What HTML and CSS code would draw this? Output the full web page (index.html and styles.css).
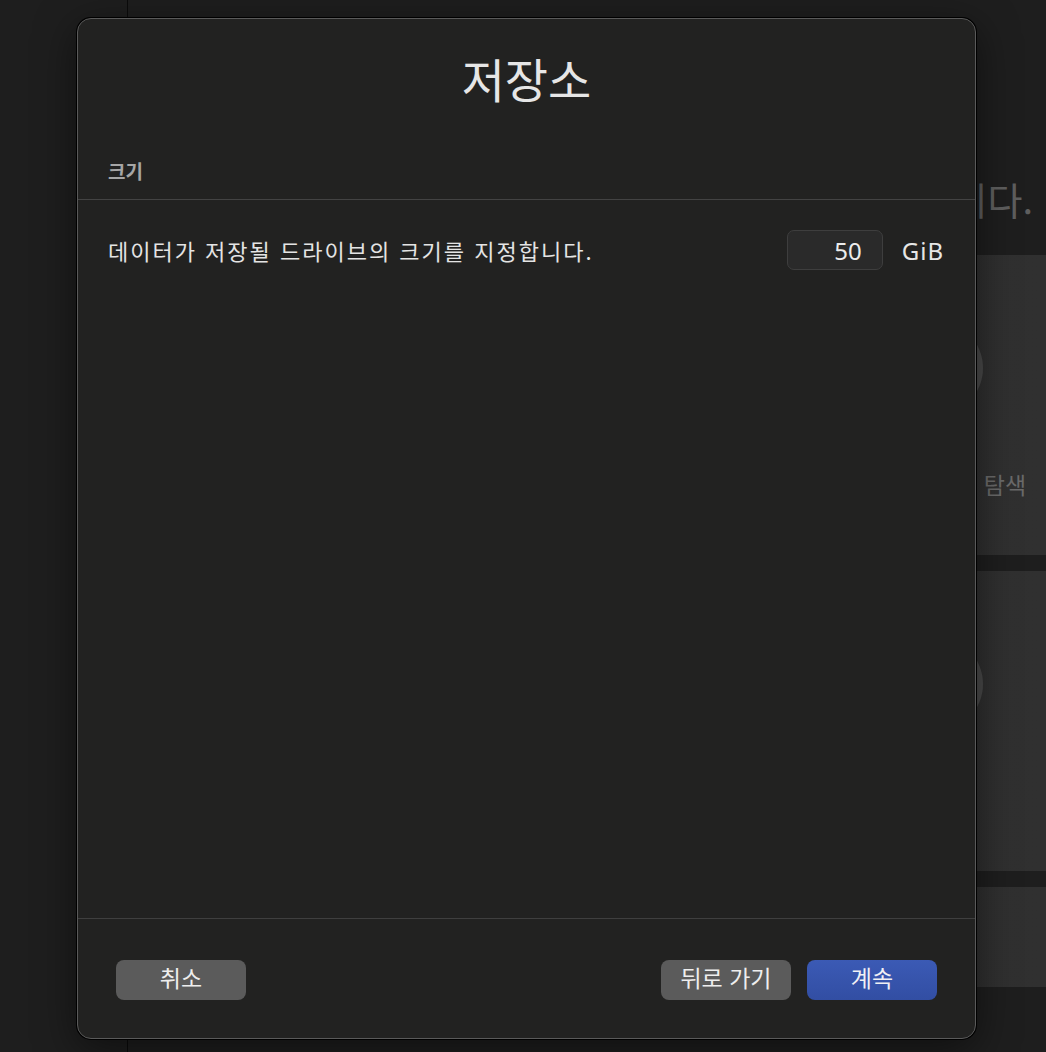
FILE: index.html
```html
<!DOCTYPE html>
<html lang="ko">
<head>
<meta charset="utf-8">
<title>저장소</title>
<link rel="stylesheet" href="styles.css">
</head>
<body>
<div class="app">
  <aside class="sidebar"></aside>
  <main class="main">
    <h1 class="main-heading">설치할 가상 머신의 종류를 선택합니다.</h1>
    <section class="card card-tall">
      <div class="option">
        <div class="option-circle"></div>
        <div class="option-label">디스크 이미지 탐색</div>
      </div>
    </section>
    <section class="card card-tall">
      <div class="option">
        <div class="option-circle"></div>
        <div class="option-label">설치</div>
      </div>
    </section>
    <section class="card card-short"></section>
  </main>
</div>

<div class="dialog">
  <h2 class="dialog-title">저장소</h2>
  <div class="section-header">크기</div>
  <div class="setting-row">
    <span class="setting-desc">데이터가 저장될 드라이브의 크기를 지정합니다.</span>
    <div class="size-field">
      <input class="size-input" type="text" value="50">
      <span class="size-unit">GiB</span>
    </div>
  </div>
  <div class="dialog-spacer"></div>
  <div class="dialog-footer">
    <button class="btn btn-gray">취소</button>
    <div class="footer-right">
      <button class="btn btn-gray">뒤로 가기</button>
      <button class="btn btn-blue">계속</button>
    </div>
  </div>
</div>
</body>
</html>
```

FILE: styles.css
```css
* { box-sizing: border-box; }

html, body {
  margin: 0;
  padding: 0;
  width: 1046px;
  height: 1052px;
  overflow: hidden;
  background: #1e1e1e;
  font-family: "Noto Sans CJK KR", "Noto Sans", sans-serif;
}

.app {
  display: flex;
  height: 1052px;
}

.sidebar {
  width: 128px;
  flex: none;
  background: #1e1e1e;
  border-right: 1px solid #0b0b0b;
}

.main {
  flex: 1;
  display: flex;
  flex-direction: column;
  gap: 16px;
  padding: 0 0 0 16px;
}

.main-heading {
  margin: 176px 13px 17px 0;
  font-size: 38px;
  font-weight: 400;
  line-height: 46px;
  color: #5e5e5e;
  text-align: right;
  white-space: nowrap;
}

.card {
  background: linear-gradient(90deg, #2b2b2b, #303030);
  display: flex;
  justify-content: flex-end;
  padding-right: 16px;
}

.card-tall { height: 300px; }
.card-short { height: 100px; }

.option {
  width: 190px;
  display: flex;
  flex-direction: column;
  align-items: center;
  padding-top: 65px;
}

.option-circle {
  width: 96px;
  height: 96px;
  border-radius: 50%;
  background: #4a4a4a;
}

.option-label {
  margin-top: 54px;
  font-size: 23px;
  line-height: 28px;
  color: #6a6a6a;
  white-space: nowrap;
}

/* Dialog */
.dialog {
  position: absolute;
  left: 77px;
  top: 18px;
  width: 899px;
  height: 1021px;
  background: #222221;
  border: 1px solid #5a5a5a;
  border-radius: 14px;
  box-shadow: 0 0 0 1px #000, 0 10px 40px rgba(0,0,0,0.5);
  display: flex;
  flex-direction: column;
  color: #e4e4e4;
}

.dialog-title {
  margin: 31px 0 0;
  text-align: center;
  font-size: 47px;
  font-weight: 400;
  line-height: 56px;
  color: #e6e6e6;
}

.section-header {
  margin-top: 53px;
  padding: 0 30px 16px;
  font-size: 19px;
  font-weight: 700;
  line-height: 24px;
  color: #a6a6a6;
  border-bottom: 1px solid #434343;
}

.setting-row {
  display: flex;
  align-items: center;
  justify-content: space-between;
  padding: 30px 31px 0 30px;
}

.setting-desc {
  font-size: 22px;
  letter-spacing: 2px;
  line-height: 28px;
  color: #e4e4e4;
}

.size-field {
  display: flex;
  align-items: center;
  gap: 19px;
}

.size-input {
  width: 96px;
  height: 40px;
  border: 1px solid #3e3e3e;
  border-radius: 7px;
  background: #2a2a2a;
  color: #ececec;
  font-family: "Noto Sans", "Noto Sans CJK KR", sans-serif;
  font-size: 24px;
  text-align: right;
  padding: 0 20px 0 8px;
  outline: none;
}

.size-unit {
  font-family: "Noto Sans", "Noto Sans CJK KR", sans-serif;
  font-size: 24px;
  letter-spacing: 1px;
  color: #e6e6e6;
}

.dialog-spacer { flex: 1; }

.dialog-footer {
  border-top: 1px solid #3f3f3f;
  display: flex;
  justify-content: space-between;
  align-items: center;
  padding: 41px 38px 38px 38px;
}

.footer-right {
  display: flex;
  gap: 16px;
}

.btn {
  width: 130px;
  height: 40px;
  border: none;
  border-radius: 8px;
  font-family: "Noto Sans CJK KR", "Noto Sans", sans-serif;
  font-size: 23px;
  font-weight: 400;
  color: #eeeeee;
  padding: 0 0 5px;
  line-height: 35px;
}

.btn-gray {
  background: #5b5b5b;
}

.btn-blue {
  background: linear-gradient(180deg, #3b5ab5, #324ea3);
  color: #f0f0f4;
}
```
